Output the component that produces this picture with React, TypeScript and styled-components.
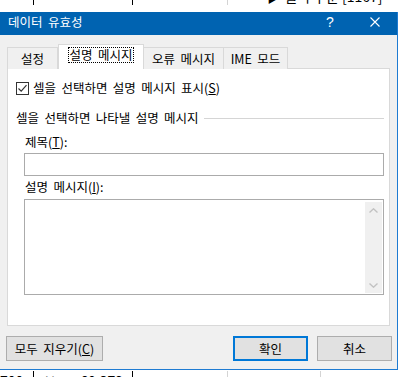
import React from "react";
import styled, { createGlobalStyle } from "styled-components";

const FONT = `"Noto Sans CJK KR", "Noto Sans", sans-serif`;

const GlobalStyle = createGlobalStyle`
  html, body {
    margin: 0;
    padding: 0;
    background: #ffffff;
  }
  body {
    font-family: ${FONT};
    font-size: 12px;
    color: #000000;
  }
`;

const Screen = styled.div`
  position: relative;
  width: 401px;
  height: 377px;
  overflow: hidden;
  background: #ffffff;
`;

const Sheet = styled.div`
  display: flex;
  flex-direction: column;
  justify-content: space-between;
  height: 100%;
`;

const SheetRow = styled.div<{ $h: number }>`
  display: flex;
  height: ${(p) => p.$h}px;
  overflow: hidden;
`;

const Cell = styled.div<{ $w?: number; $line: "dark" | "light" | "none"; $shift: number; $pad?: number }>`
  box-sizing: border-box;
  ${(p) => (p.$w ? `width: ${p.$w}px; flex: none;` : "flex: 1;")}
  border-right: 1px solid
    ${(p) => (p.$line === "dark" ? "#000000" : p.$line === "light" ? "#d4d4d4" : "transparent")};
  display: flex;
  justify-content: space-between;
  font-size: 14px;
  line-height: 18px;
  height: 18px;
  padding: 0 9px 0 ${(p) => p.$pad ?? 0}px;
  white-space: nowrap;
  margin-top: ${(p) => p.$shift}px;
  color: #000;
`;

const Dialog = styled.div`
  position: absolute;
  top: 12px;
  left: -1px;
  width: 399px;
  height: 358px;
  box-sizing: border-box;
  border: 1px solid #1e7bd2;
  border-top: none;
  background: #f0f0f0;
  display: flex;
  flex-direction: column;
  font-family: ${FONT};
  font-size: 12.5px;
  word-spacing: 2.6px;
  white-space: nowrap;
`;

const TitleBar = styled.div`
  height: 23px;
  flex: none;
  background: #0063b1;
  color: #ffffff;
  display: flex;
  align-items: center;
  padding: 0 1px 3px 8px;
  box-sizing: border-box;
`;

const TitleText = styled.div`
  flex: 1;
  line-height: 14px;
`;

const TitleButton = styled.div<{ $w: number }>`
  width: ${(p) => p.$w}px;
  height: 20px;
  display: flex;
  align-items: center;
  justify-content: center;
  font-size: 14px;
  line-height: 14px;
  font-family: "Liberation Sans", Arial, sans-serif;
`;

const Body = styled.div`
  flex: 1;
  display: flex;
  flex-direction: column;
  padding-top: 9px;
`;

const TabStrip = styled.div`
  display: flex;
  align-items: flex-end;
  height: 25px;
  margin-left: 7px;
  margin-bottom: -1px;
  position: relative;
  z-index: 1;
`;

const Tab = styled.div<{ $w: number; $active?: boolean }>`
  box-sizing: border-box;
  width: ${(p) => p.$w}px;
  height: ${(p) => (p.$active ? 25 : 22)}px;
  margin-left: ${(p) => (p.$active ? 0 : -1)}px;
  border: 1px solid #d9d9d9;
  border-bottom: none;
  background: ${(p) => (p.$active ? "#ffffff" : "#f0f0f0")};
  display: flex;
  justify-content: center;
  align-items: ${(p) => (p.$active ? "flex-start" : "center")};
  padding-top: ${(p) => (p.$active ? 2 : 0)}px;
  line-height: 14px;
  &:first-child {
    margin-left: 0;
  }
`;

const FocusLabel = styled.span`
  border: 1px dotted #000;
  padding: 0 1px;
  line-height: 14px;
`;

const Panel = styled.div`
  box-sizing: border-box;
  width: 383px;
  height: 258px;
  margin-left: 7px;
  border: 1px solid #d9d9d9;
  background: #ffffff;
  display: flex;
  flex-direction: column;
  padding: 12px 5px 0 8px;
`;

const CheckRow = styled.div`
  display: flex;
  align-items: center;
  height: 14px;
  gap: 4px;
  line-height: 14px;
`;

const Box = styled.div`
  width: 13px;
  height: 13px;
  box-sizing: border-box;
  border: 1px solid #333333;
  background: #ffffff;
  display: flex;
  align-items: center;
  justify-content: center;
`;

const GroupRow = styled.div`
  display: flex;
  align-items: center;
  height: 16px;
  margin-top: 15px;
  line-height: 16px;
`;

const GroupLine = styled.div`
  flex: 1;
  height: 1px;
  background: #d5d5d5;
  margin-left: 5px;
`;

const FieldLabel = styled.div<{ $gap: number }>`
  margin: ${(p) => p.$gap}px 0 0 9px;
  height: 16px;
  line-height: 16px;
`;

const TextBox = styled.div<{ $h: number; $gap: number }>`
  box-sizing: border-box;
  height: ${(p) => p.$h}px;
  margin: ${(p) => p.$gap}px 0 0 8px;
  border: 1px solid #ababab;
  background: #ffffff;
  display: flex;
  justify-content: flex-end;
  padding: 2px 1px 1px 0;
`;

const ScrollBar = styled.div`
  width: 17px;
  background: #f0f0f0;
  display: flex;
  flex-direction: column;
  justify-content: space-between;
  align-items: center;
  padding: 6px 0 5px;
  box-sizing: border-box;
`;

const ButtonRow = styled.div`
  display: flex;
  margin-top: 10px;
  padding: 0 5px 0 6px;
`;

const Spacer = styled.div`
  flex: 1;
`;

const Button = styled.div<{ $w: number; $primary?: boolean }>`
  box-sizing: border-box;
  width: ${(p) => p.$w}px;
  height: 25px;
  margin-left: ${(p) => (p.$primary ? 0 : 9)}px;
  border: ${(p) => (p.$primary ? "2px solid #0078d7" : "1px solid #adadad")};
  background: #e1e1e1;
  display: flex;
  align-items: center;
  justify-content: center;
  line-height: 14px;
  &:first-child {
    margin-left: 0;
  }
`;

const Chevron = ({ up }: { up?: boolean }) => (
  <svg width="9" height="5" viewBox="0 0 9 5">
    <path
      d={up ? "M0.5 4.5 L4.5 0.8 L8.5 4.5" : "M0.5 0.5 L4.5 4.2 L8.5 0.5"}
      fill="none"
      stroke="#c2c2c2"
      strokeWidth="1.4"
    />
  </svg>
);

export default function App() {
  return (
    <Screen>
      <GlobalStyle />
      <Sheet>
        <SheetRow $h={12}>
          <Cell $w={34} $line="dark" $shift={-13} />
          <Cell $w={99} $line="dark" $shift={-13} />
          <Cell $w={95} $line="light" $shift={-13} />
          <Cell $line="none" $shift={-13} $pad={39}>
            <span>▶ 실적 구분 [1167]</span>
          </Cell>
        </SheetRow>
        <SheetRow $h={7}>
          <Cell $w={34} $line="dark" $shift={1}>
            <span>700</span>
          </Cell>
          <Cell $w={99} $line="dark" $shift={1} $pad={12}>
            <span>₩</span>
            <span>60,372</span>
          </Cell>
          <Cell $w={95} $line="light" $shift={1} />
          <Cell $w={93} $line="light" $shift={1} />
          <Cell $line="none" $shift={1} />
        </SheetRow>
      </Sheet>

      <Dialog>
        <TitleBar>
          <TitleText>데이터 유효성</TitleText>
          <TitleButton $w={48}>?</TitleButton>
          <TitleButton $w={42}>
            <svg width="10" height="10" viewBox="0 0 10 10">
              <path d="M0.5 0.5 L9.5 9.5 M9.5 0.5 L0.5 9.5" stroke="#ffffff" strokeWidth="1.1" />
            </svg>
          </TitleButton>
        </TitleBar>
        <Body>
          <TabStrip>
            <Tab $w={51}>설정</Tab>
            <Tab $w={86} $active>
              <FocusLabel>설명 메시지</FocusLabel>
            </Tab>
            <Tab $w={81}>오류 메시지</Tab>
            <Tab $w={65}>IME 모드</Tab>
          </TabStrip>
          <Panel>
            <CheckRow>
              <Box>
                <svg width="11" height="11" viewBox="0 0 11 11">
                  <path d="M1.5 5.5 L4.2 8.2 L9.5 2.2" fill="none" stroke="#333333" strokeWidth="1.2" />
                </svg>
              </Box>
              <span>
                셀을 선택하면 설명 메시지 표시(<u>S</u>)
              </span>
            </CheckRow>
            <GroupRow>
              <span>셀을 선택하면 나타낼 설명 메시지</span>
              <GroupLine />
            </GroupRow>
            <FieldLabel $gap={8}>
              제목(<u>T</u>):
            </FieldLabel>
            <TextBox $h={23} $gap={3} />
            <FieldLabel $gap={3}>
              설명 메시지(<u>I</u>):
            </FieldLabel>
            <TextBox $h={96} $gap={4}>
              <ScrollBar>
                <Chevron up />
                <Chevron />
              </ScrollBar>
            </TextBox>
          </Panel>
          <ButtonRow>
            <Button $w={97}>
              모두 지우기(<u>C</u>)
            </Button>
            <Spacer />
            <Button $w={75} $primary>
              확인
            </Button>
            <Button $w={75}>취소</Button>
          </ButtonRow>
        </Body>
      </Dialog>
    </Screen>
  );
}
